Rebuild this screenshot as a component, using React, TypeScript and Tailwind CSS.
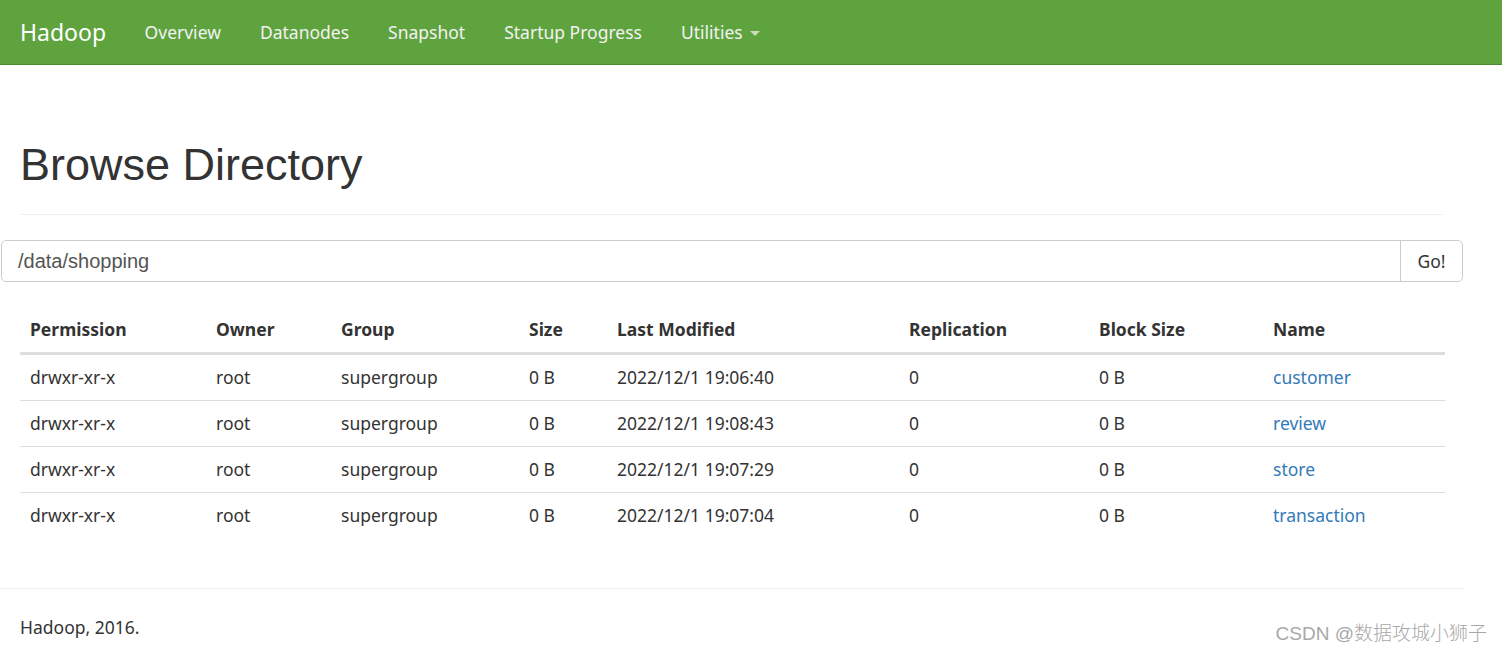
const rows = [
  { perm: "drwxr-xr-x", owner: "root", group: "supergroup", size: "0 B", modified: "2022/12/1 19:06:40", repl: "0", block: "0 B", name: "customer" },
  { perm: "drwxr-xr-x", owner: "root", group: "supergroup", size: "0 B", modified: "2022/12/1 19:08:43", repl: "0", block: "0 B", name: "review" },
  { perm: "drwxr-xr-x", owner: "root", group: "supergroup", size: "0 B", modified: "2022/12/1 19:07:29", repl: "0", block: "0 B", name: "store" },
  { perm: "drwxr-xr-x", owner: "root", group: "supergroup", size: "0 B", modified: "2022/12/1 19:07:04", repl: "0", block: "0 B", name: "transaction" },
];

const cols = [
  { label: "Permission", w: "w-[186px]" },
  { label: "Owner", w: "w-[125px]" },
  { label: "Group", w: "w-[188px]" },
  { label: "Size", w: "w-[88px]" },
  { label: "Last Modified", w: "w-[292px]" },
  { label: "Replication", w: "w-[190px]" },
  { label: "Block Size", w: "w-[174px]" },
  { label: "Name", w: "w-[182px]" },
];

const navLinks = ["Overview", "Datanodes", "Snapshot", "Startup Progress"];

export default function App() {
  return (
    <div className="relative min-h-[654px] w-[1502px] bg-white text-[#333] font-['Noto_Sans',sans-serif] text-[17.5px]">
      {/* NAVBAR */}
      <nav className="flex h-[65px] w-full items-center border-b border-[#4b8a2e] bg-[#5fa33e]">
        <span className="pl-[20px] pr-[19px] text-[23px] text-white">Hadoop</span>
        {navLinks.map((l) => (
          <span key={l} className="px-[19.5px] text-[#f2f2f2]">
            {l}
          </span>
        ))}
        <span className="flex items-center px-[19.5px] text-[#f2f2f2]">
          Utilities
          <span className="ml-[7px] mt-[2px] h-0 w-0 border-x-[5px] border-t-[5px] border-x-transparent border-t-[#c8dcbd]" />
        </span>
      </nav>

      <div className="w-[1463px]">
        {/* TITLE */}
        <div className="mx-[20px] mt-[70px] border-b border-[#eee] pb-[19px]">
          <h1 className="font-['Liberation_Sans',Arial,sans-serif] text-[45px] leading-[60px]">Browse Directory</h1>
        </div>

        {/* PATH INPUT */}
        <div className="ml-[1px] mt-[25px] flex h-[42px] rounded-[5px] border border-[#ccc]">
          <div className="flex flex-1 items-center pl-[16px] font-['Liberation_Sans',Arial,sans-serif] text-[20px] text-[#555]">
            /data/shopping
          </div>
          <div className="flex w-[62px] items-center justify-center border-l border-[#ccc]">Go!</div>
        </div>

        {/* TABLE */}
        <table className="mx-[20px] mt-[24px] w-[1425px] table-fixed border-collapse">
          <thead>
            <tr>
              {cols.map((c) => (
                <th
                  key={c.label}
                  className={`${c.w} border-b-[3px] border-[#ddd] px-[10px] py-[10px] text-left font-bold leading-[26px]`}
                >
                  {c.label}
                </th>
              ))}
            </tr>
          </thead>
          <tbody>
            {rows.map((r, i) => (
              <tr key={r.name} className={i > 0 ? "border-t border-[#ddd]" : ""}>
                <td className="px-[10px] py-[10px] leading-[25px]">{r.perm}</td>
                <td className="px-[10px] py-[10px] leading-[25px]">{r.owner}</td>
                <td className="px-[10px] py-[10px] leading-[25px]">{r.group}</td>
                <td className="px-[10px] py-[10px] leading-[25px]">{r.size}</td>
                <td className="px-[10px] py-[10px] leading-[25px]">{r.modified}</td>
                <td className="px-[10px] py-[10px] leading-[25px]">{r.repl}</td>
                <td className="px-[10px] py-[10px] leading-[25px]">{r.block}</td>
                <td className="px-[10px] py-[10px] leading-[25px] text-[#337ab7]">{r.name}</td>
              </tr>
            ))}
          </tbody>
        </table>

        {/* FOOTER */}
        <div className="mt-[50px] border-t border-[#eee] px-[20px] pt-[25px]">Hadoop, 2016.</div>
      </div>

      <div className="absolute bottom-[6px] right-[15px] font-['Liberation_Sans','Noto_Sans_CJK_SC',sans-serif] text-[19px] font-light text-[#a8a8a8]">
        CSDN @数据攻城小狮子
      </div>
    </div>
  );
}
